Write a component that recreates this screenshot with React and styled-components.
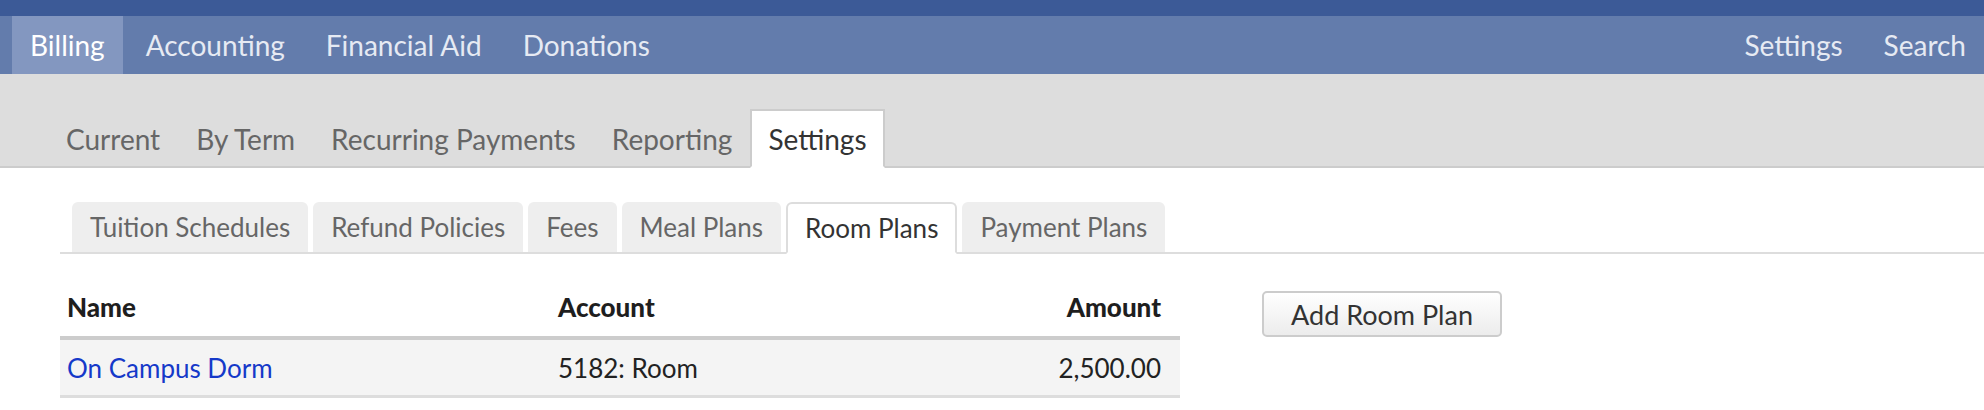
import React from "react";
import styled, { createGlobalStyle } from "styled-components";

const GlobalStyle = createGlobalStyle`
  html, body {
    margin: 0;
    padding: 0;
    background: #fff;
  }
  body {
    font-family: "Lato", "Open Sans", sans-serif;
    color: #333;
  }
`;

const mainNav = ["Billing", "Accounting", "Financial Aid", "Donations"];
const rightNav = ["Settings", "Search"];
const subNav = ["Current", "By Term", "Recurring Payments", "Reporting", "Settings"];
const settingsTabs = [
  "Tuition Schedules",
  "Refund Policies",
  "Fees",
  "Meal Plans",
  "Room Plans",
  "Payment Plans",
];

const rows = [{ name: "On Campus Dorm", account: "5182: Room", amount: "2,500.00" }];

const App = () => {
  return (
    <>
      <GlobalStyle />
      <TopStrip />
      <MainBar>
        <NavGroup>
          {mainNav.map((item) => (
            <NavItem key={item} active={item === "Billing"}>
              {item}
            </NavItem>
          ))}
        </NavGroup>
        <NavGroup>
          {rightNav.map((item) => (
            <NavItem key={item}>{item}</NavItem>
          ))}
        </NavGroup>
      </MainBar>

      <SubBar>
        {subNav.map((item) => (
          <SubTab key={item} active={item === "Settings"}>
            {item}
          </SubTab>
        ))}
      </SubBar>

      <Content>
        <PillRow>
          {settingsTabs.map((item) => (
            <Pill key={item} active={item === "Room Plans"}>
              {item}
            </Pill>
          ))}
        </PillRow>

        <Body>
          <Table>
            <thead>
              <tr>
                <Th>Name</Th>
                <Th>Account</Th>
                <Th right>Amount</Th>
              </tr>
            </thead>
            <tbody>
              {rows.map((r) => (
                <tr key={r.name}>
                  <Td>
                    <NameLink href="#">{r.name}</NameLink>
                  </Td>
                  <Td>{r.account}</Td>
                  <Td right>{r.amount}</Td>
                </tr>
              ))}
            </tbody>
          </Table>
          <Button>Add Room Plan</Button>
        </Body>
      </Content>
    </>
  );
};

const TopStrip = styled.div`
  height: 16px;
  background: #3c5a97;
`;

const MainBar = styled.div`
  height: 58px;
  background: #637cac;
  display: flex;
  justify-content: space-between;
  padding: 0 0 0 12px;
`;

const NavGroup = styled.div`
  display: flex;
  gap: 5px;
`;

const NavItem = styled.a`
  display: flex;
  align-items: center;
  padding: 0 18px;
  font-size: 28px;
  color: ${(p) => (p.active ? "#ffffff" : "#e6eaf3")};
  background: ${(p) => (p.active ? "#8397c0" : "transparent")};
  cursor: pointer;
`;

const SubBar = styled.div`
  height: 92px;
  background: #dddddd;
  border-bottom: 2px solid #cccccc;
  display: flex;
  align-items: flex-end;
  padding-left: 48px;
`;

const SubTab = styled.a`
  display: flex;
  align-items: center;
  height: 55px;
  padding: 0 16px;
  margin-bottom: -2px;
  font-size: 28px;
  color: ${(p) => (p.active ? "#333333" : "#666666")};
  background: ${(p) => (p.active ? "#ffffff" : "transparent")};
  border: 2px solid ${(p) => (p.active ? "#cccccc" : "transparent")};
  border-bottom: 2px solid ${(p) => (p.active ? "#ffffff" : "transparent")};
  box-sizing: content-box;
`;

const Content = styled.div`
  padding: 34px 0 0 60px;
`;

const PillRow = styled.div`
  display: flex;
  gap: 5px;
  padding-left: 12px;
  border-bottom: 2px solid #dddddd;
  height: 50px;
  align-items: flex-end;
`;

const Pill = styled.div`
  height: ${(p) => (p.active ? "48px" : "50px")};
  padding: 0 ${(p) => (p.active ? "17px" : "18px")};
  margin-bottom: ${(p) => (p.active ? "-2px" : "0")};
  display: flex;
  align-items: center;
  font-size: 26px;
  color: ${(p) => (p.active ? "#333333" : "#666666")};
  background: ${(p) => (p.active ? "#ffffff" : "#eeeeee")};
  border: ${(p) => (p.active ? "2px solid #dddddd" : "none")};
  border-bottom: ${(p) => (p.active ? "2px solid #ffffff" : "none")};
  border-radius: 6px 6px 0 0;
`;

const Body = styled.div`
  display: flex;
  align-items: flex-start;
  gap: 82px;
  padding-top: 37px;
`;

const Table = styled.table`
  width: 1120px;
  border-collapse: collapse;
  font-size: 26px;
`;

const Th = styled.th`
  height: 45px;
  padding: 0 ${(p) => (p.right ? "19px" : "7px")} 0 7px;
  text-align: ${(p) => (p.right ? "right" : "left")};
  vertical-align: top;
  font-weight: 900;
  color: #1e1e1e;
  border-bottom: 4px solid #cccccc;
  &:first-child {
    width: 477px;
  }
`;

const Td = styled.td`
  height: 55px;
  padding: 0 ${(p) => (p.right ? "19px" : "7px")} 0 7px;
  text-align: ${(p) => (p.right ? "right" : "left")};
  background: #f4f4f4;
  color: #222;
  border-bottom: 3px solid #dddddd;
`;

const NameLink = styled.a`
  color: #1539c9;
  text-decoration: none;
`;

const Button = styled.button`
  width: 240px;
  height: 46px;
  font-family: inherit;
  font-size: 27px;
  color: #333;
  border: 2px solid #cccccc;
  border-radius: 5px;
  background: linear-gradient(#ffffff, #ececec);
  cursor: pointer;
`;

export default App;
